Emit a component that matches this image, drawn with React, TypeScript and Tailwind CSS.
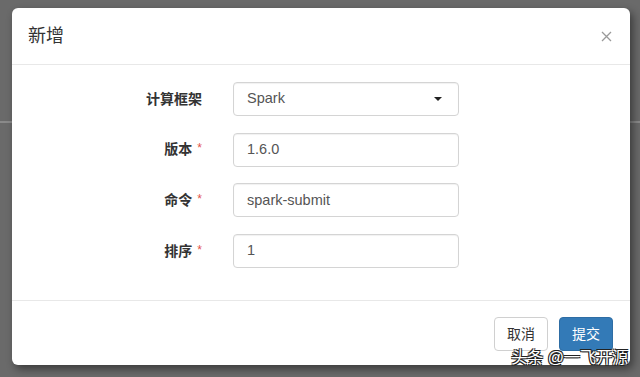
import React from 'react';

const font = { fontFamily: '"Liberation Sans", "Noto Sans CJK SC", sans-serif' };

const fields = [
  { label: '计算框架', value: 'Spark', required: false, select: true },
  { label: '版本', value: '1.6.0', required: true },
  { label: '命令', value: 'spark-submit', required: true },
  { label: '排序', value: '1', required: true },
];

export default function App() {
  return (
    <div className="relative w-[640px] h-[377px] overflow-hidden bg-[#6a6a6a]" style={font}>
      {/* page behind the backdrop */}
      <div className="h-[123px] border-b-2 border-[#8a8a8a]" />

      {/* modal */}
      <div className="absolute left-[12px] top-[8px] w-[618px] h-[357px] flex flex-col rounded-[6px] bg-white shadow-[3px_4px_8px_rgba(0,0,0,0.45)]">
        <div className="h-[57px] flex items-center justify-between pl-[16px] pr-[18px] border-b border-[#e8e8e8]">
          <h4 className="text-[18px] text-[#333] leading-none">新增</h4>
          <svg width="11" height="11" viewBox="0 0 11 11" className="text-[#9a9a9a]">
            <path d="M1 1L10 10M10 1L1 10" stroke="currentColor" strokeWidth="1.3" />
          </svg>
        </div>

        <div className="flex-1 flex flex-col gap-y-[16.7px] pt-[17px]">
          {fields.map((f) => (
            <div key={f.label} className="flex items-center h-[34px]">
              <label className="w-[190px] text-right text-[14px] font-bold text-[#333]">
                {f.label}
                {f.required && <span className="ml-[5px] text-[#e3524a] font-normal text-[12px] align-top">*</span>}
              </label>
              <div className="ml-[31px] w-[226px] h-[34px] flex items-center justify-between px-[13px] rounded-[4px] border border-[#d4d4d4] shadow-[inset_0_1px_1px_rgba(0,0,0,0.06)] text-[14.5px] text-[#555]">
                <span>{f.value}</span>
                {f.select && (
                  <svg width="8" height="4" viewBox="0 0 8 4" className="mr-[3px]">
                    <path d="M0 0H8L4 4Z" fill="#222" />
                  </svg>
                )}
              </div>
            </div>
          ))}
        </div>

        <div className="h-[65px] flex items-start justify-end gap-[11px] pt-[16px] pr-[17px] border-t border-[#e8e8e8]">
          <button className="w-[54px] h-[34px] rounded-[4px] border border-[#d0d0d0] bg-white text-[14px] text-[#333]">取消</button>
          <button className="w-[54px] h-[34px] rounded-[4px] border border-[#2e6da4] bg-[#337ab7] text-[14px] text-white">提交</button>
        </div>

        {/* watermark */}
        <div className="absolute right-[2px] bottom-[-1px] text-[16px] text-white leading-none [text-shadow:-1px_-1px_0_#222,1px_-1px_0_#222,-1px_1px_0_#222,1px_1px_0_#222]">
          头条 @一飞开源
        </div>
      </div>
    </div>
  );
}
